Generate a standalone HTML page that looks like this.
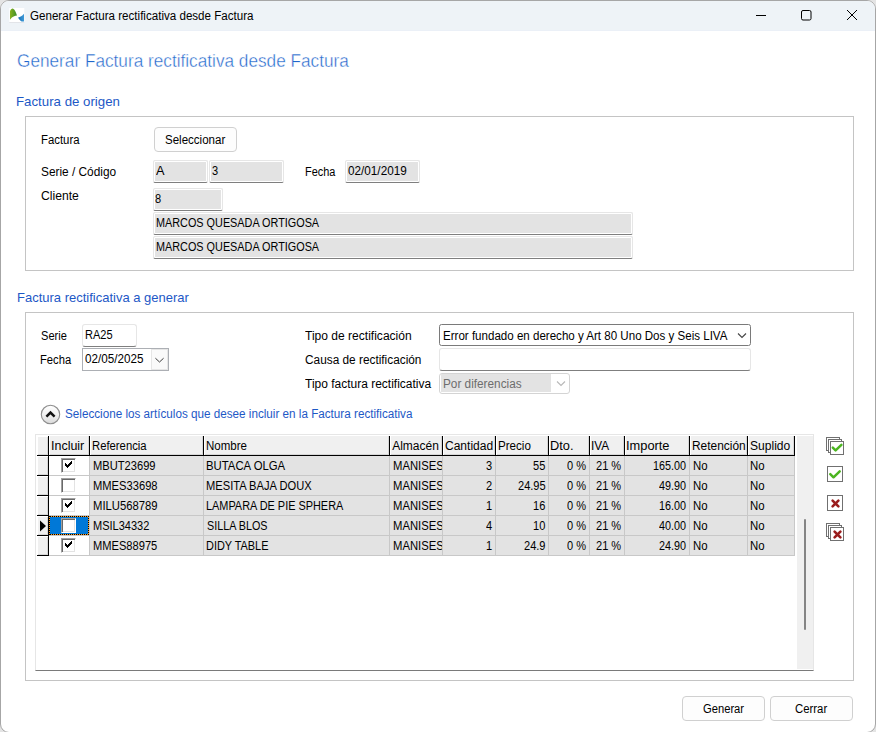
<!DOCTYPE html>
<html><head><meta charset="utf-8"><style>
html,body{margin:0;padding:0;width:876px;height:732px;overflow:hidden;background:#e4e4e4;}
*{box-sizing:border-box;}
body{font-family:"Liberation Sans",sans-serif;font-size:12px;color:#000;position:relative;}
#win{position:absolute;left:0;top:0;width:876px;height:733px;background:#fff;border:1px solid #a6a6a6;border-radius:9px;overflow:hidden;}
#tb{position:absolute;left:0;top:0;width:874px;height:30px;background:#eef3f7;border-bottom:1px solid #ebf0f7;}
.a{position:absolute;}
.t{position:absolute;white-space:nowrap;transform-origin:0 0;}
.light{-webkit-text-stroke:0.4px #fff;}
.box{position:absolute;border:1px solid #c4c4c4;}
.ro{position:absolute;background:#e3e3e3;border:1px solid #e6e6e6;border-bottom:1px solid #7f7f7f;border-radius:2px;box-shadow:inset 0 0 0 1px #fff;}
.ed{position:absolute;background:#fff;border:1px solid #e6e6e6;border-bottom:1px solid #7f7f7f;border-radius:3px;}
.hd{top:436px;height:20px;background:#f0f0f0;border-right:1px solid #000;border-bottom:1px solid #000;box-shadow:inset 1px 0 0 #fff, inset -1px -1px 0 #d6d6d6;}
.rh{left:37px;width:12px;height:20px;background:#f0f0f0;border-right:1px solid #000;border-bottom:1px solid #000;box-shadow:inset 1px 1px 0 #fff, inset -1px -1px 0 #d6d6d6;}
.cell{height:20px;border-right:1px solid #c8c8c8;border-bottom:1px solid #c8c8c8;}
.chk{left:61px;width:15px;height:15px;background:#fff;border-top:1px solid #a0a0a0;border-left:1px solid #a0a0a0;border-right:1px solid #fff;border-bottom:1px solid #fff;box-shadow:inset 1px 1px 0 #696969, inset -1px -1px 0 #e3e3e3;}
.btn{position:absolute;background:#fdfdfd;border:1px solid #d0d0d0;border-radius:4px;}
</style></head><body>

<div id="win"><div id="tb"></div></div>
<svg class="a" style="left:9px;top:8px" width="16" height="16" viewBox="0 0 16 16">
  <defs><linearGradient id="gg" x1="0" y1="0" x2="1" y2="0"><stop offset="0" stop-color="#86b21d"/><stop offset="1" stop-color="#3a8c2c"/></linearGradient>
  <linearGradient id="bg" x1="0" y1="0" x2="1" y2="0"><stop offset="0" stop-color="#1a6fb5"/><stop offset="1" stop-color="#3f9bd8"/></linearGradient></defs>
  <rect x="0.3" y="0" width="15" height="14" fill="#fff"/>
  <rect x="0.3" y="14" width="15" height="1" fill="#e2e4e8"/>
  <path d="M1 11.5 L1 3.2 C1.6 1.4 2.6 0.6 3.6 0.6 C5.2 0.7 7 4 8 7.6 C6 7.7 3.4 8.6 1.2 11.5 Z" fill="url(#gg)"/>
  <path d="M9.1 9.6 C11.2 9 13.2 8 15 5.8 L15 13.6 L12.6 13.6 C11.2 12.6 9.8 11.2 9.1 9.6 Z" fill="url(#bg)"/>
</svg>
<svg class="a" style="left:740px;top:0" width="136" height="30">
  <line x1="16" y1="15.5" x2="26" y2="15.5" stroke="#000" stroke-width="1"/>
  <rect x="61.5" y="10.5" width="9.5" height="9.5" rx="1.5" fill="none" stroke="#000" stroke-width="1"/>
  <path d="M107 10 L117 20 M117 10 L107 20" stroke="#000" stroke-width="1"/>
</svg>

<div class="box" style="left:25px;top:116px;width:829px;height:155px"></div><div class="box" style="left:25px;top:312px;width:829px;height:369px"></div><div class="btn" style="left:154px;top:127px;width:83px;height:25px"></div><div class="ro" style="left:153px;top:160px;width:55px;height:23px"></div><div class="ro" style="left:209px;top:160px;width:75px;height:23px"></div><div class="ro" style="left:345px;top:160px;width:75px;height:23px"></div><div class="ro" style="left:153px;top:188px;width:70px;height:23px"></div><div class="ro" style="left:153px;top:212px;width:480px;height:23px"></div><div class="ro" style="left:153px;top:236px;width:480px;height:23px"></div><div class="ed" style="left:82px;top:324px;width:55px;height:23px"></div><div class="a" style="left:82px;top:348px;width:87px;height:23px;border:1px solid #acafb4;background:#fff"></div><div class="a" style="left:151px;top:349px;width:17px;height:21px;border:1px solid #e6e6e6;background:#fafafa"></div><svg class="a" style="left:154px;top:356px" width="11" height="8"><path d="M1.4 2.2 L5.5 6 L9.6 2.2" fill="none" stroke="#3c3c3c" stroke-width="1"/></svg><div class="a" style="left:439px;top:324px;width:312px;height:22px;border:1px solid #7a7a7a;border-radius:2.5px;background:#fff"></div><svg class="a" style="left:736px;top:331px" width="12" height="9"><path d="M2 2.5 L6 6.5 L10 2.5" fill="none" stroke="#444" stroke-width="1.1"/></svg><div class="ed" style="left:439px;top:348px;width:312px;height:23px"></div><div class="a" style="left:439px;top:373px;width:131px;height:21px;border:1px solid #d4d4d4;border-radius:3px;background:#fff"></div><div class="a" style="left:441px;top:374px;width:110px;height:18px;background:#e3e3e3"></div><svg class="a" style="left:555px;top:379px" width="12" height="9"><path d="M2 2.5 L6 6.5 L10 2.5" fill="none" stroke="#b8b8b8" stroke-width="1.1"/></svg><svg class="a" style="left:40px;top:404px" width="22" height="22"><defs><linearGradient id="eg" x1="0" y1="0" x2="0" y2="1"><stop offset="0" stop-color="#ffffff"/><stop offset="0.5" stop-color="#f1f1f1"/><stop offset="1" stop-color="#d9d9d9"/></linearGradient></defs><circle cx="10.5" cy="10.5" r="9.2" fill="url(#eg)" stroke="#8e8e8e" stroke-width="1.1"/><path d="M6.4 12.6 L10.5 8.5 L14.6 12.6" fill="none" stroke="#111" stroke-width="2.5"/></svg><div class="btn" style="left:682px;top:696px;width:83px;height:25px"></div><div class="btn" style="left:770px;top:696px;width:83px;height:25px"></div>
<div class="a" style="left:35px;top:434px;width:779px;height:237px;border:1px solid #e6e6e6;border-bottom-color:#7a7a7a;background:#fff"></div><div class="a" style="left:797px;top:436px;width:16px;height:233px;background:#f0f0f0"></div><div class="a" style="left:804px;top:519px;width:2px;height:111px;background:#858585;border-radius:1px"></div><div class="a rh" style="top:436px"></div><div class="a hd" style="left:49px;width:41px"></div><div class="a hd" style="left:90px;width:114px"></div><div class="a hd" style="left:204px;width:186px"></div><div class="a hd" style="left:390px;width:53px"></div><div class="a hd" style="left:443px;width:53px"></div><div class="a hd" style="left:496px;width:53px"></div><div class="a hd" style="left:549px;width:41px"></div><div class="a hd" style="left:590px;width:35px"></div><div class="a hd" style="left:625px;width:65px"></div><div class="a hd" style="left:690px;width:58px"></div><div class="a hd" style="left:748px;width:47px"></div><div class="a rh" style="top:456px"></div><div class="a cell" style="left:49px;top:456px;width:41px;background:#fff"></div><div class="a cell" style="left:90px;top:456px;width:114px;background:#e3e3e3"></div><div class="a cell" style="left:204px;top:456px;width:186px;background:#e3e3e3"></div><div class="a cell" style="left:390px;top:456px;width:53px;background:#e3e3e3"></div><div class="a cell" style="left:443px;top:456px;width:53px;background:#e3e3e3"></div><div class="a cell" style="left:496px;top:456px;width:53px;background:#e3e3e3"></div><div class="a cell" style="left:549px;top:456px;width:41px;background:#e3e3e3"></div><div class="a cell" style="left:590px;top:456px;width:35px;background:#e3e3e3"></div><div class="a cell" style="left:625px;top:456px;width:65px;background:#e3e3e3"></div><div class="a cell" style="left:690px;top:456px;width:58px;background:#e3e3e3"></div><div class="a cell" style="left:748px;top:456px;width:47px;background:#e3e3e3"></div><div class="a chk" style="top:458px"></div><svg class="a" style="left:65px;top:461px" width="7" height="7" shape-rendering="crispEdges"><path d="M6 0h1v1h-1zM5 1h2v1h-2zM0 2h1v1h-1zM4 2h3v1h-3zM0 3h2v1h-2zM3 3h3v1h-3zM0 4h5v1h-5zM1 5h3v1h-3zM2 6h1v1h-1z" fill="#000"/></svg><div class="a rh" style="top:476px"></div><div class="a cell" style="left:49px;top:476px;width:41px;background:#fff"></div><div class="a cell" style="left:90px;top:476px;width:114px;background:#e3e3e3"></div><div class="a cell" style="left:204px;top:476px;width:186px;background:#e3e3e3"></div><div class="a cell" style="left:390px;top:476px;width:53px;background:#e3e3e3"></div><div class="a cell" style="left:443px;top:476px;width:53px;background:#e3e3e3"></div><div class="a cell" style="left:496px;top:476px;width:53px;background:#e3e3e3"></div><div class="a cell" style="left:549px;top:476px;width:41px;background:#e3e3e3"></div><div class="a cell" style="left:590px;top:476px;width:35px;background:#e3e3e3"></div><div class="a cell" style="left:625px;top:476px;width:65px;background:#e3e3e3"></div><div class="a cell" style="left:690px;top:476px;width:58px;background:#e3e3e3"></div><div class="a cell" style="left:748px;top:476px;width:47px;background:#e3e3e3"></div><div class="a chk" style="top:478px"></div><div class="a rh" style="top:496px"></div><div class="a cell" style="left:49px;top:496px;width:41px;background:#fff"></div><div class="a cell" style="left:90px;top:496px;width:114px;background:#e3e3e3"></div><div class="a cell" style="left:204px;top:496px;width:186px;background:#e3e3e3"></div><div class="a cell" style="left:390px;top:496px;width:53px;background:#e3e3e3"></div><div class="a cell" style="left:443px;top:496px;width:53px;background:#e3e3e3"></div><div class="a cell" style="left:496px;top:496px;width:53px;background:#e3e3e3"></div><div class="a cell" style="left:549px;top:496px;width:41px;background:#e3e3e3"></div><div class="a cell" style="left:590px;top:496px;width:35px;background:#e3e3e3"></div><div class="a cell" style="left:625px;top:496px;width:65px;background:#e3e3e3"></div><div class="a cell" style="left:690px;top:496px;width:58px;background:#e3e3e3"></div><div class="a cell" style="left:748px;top:496px;width:47px;background:#e3e3e3"></div><div class="a chk" style="top:498px"></div><svg class="a" style="left:65px;top:501px" width="7" height="7" shape-rendering="crispEdges"><path d="M6 0h1v1h-1zM5 1h2v1h-2zM0 2h1v1h-1zM4 2h3v1h-3zM0 3h2v1h-2zM3 3h3v1h-3zM0 4h5v1h-5zM1 5h3v1h-3zM2 6h1v1h-1z" fill="#000"/></svg><div class="a rh" style="top:516px"></div><div class="a cell" style="left:49px;top:516px;width:41px;background:#fff"></div><div class="a cell" style="left:90px;top:516px;width:114px;background:#e3e3e3"></div><div class="a cell" style="left:204px;top:516px;width:186px;background:#e3e3e3"></div><div class="a cell" style="left:390px;top:516px;width:53px;background:#e3e3e3"></div><div class="a cell" style="left:443px;top:516px;width:53px;background:#e3e3e3"></div><div class="a cell" style="left:496px;top:516px;width:53px;background:#e3e3e3"></div><div class="a cell" style="left:549px;top:516px;width:41px;background:#e3e3e3"></div><div class="a cell" style="left:590px;top:516px;width:35px;background:#e3e3e3"></div><div class="a cell" style="left:625px;top:516px;width:65px;background:#e3e3e3"></div><div class="a cell" style="left:690px;top:516px;width:58px;background:#e3e3e3"></div><div class="a cell" style="left:748px;top:516px;width:47px;background:#e3e3e3"></div><div class="a" style="left:49px;top:516px;width:40px;height:19px;background:#0078d7"></div><div class="a" style="left:49px;top:516px;width:40px;height:19px;border:1px solid #ff9a1a;outline:1px dotted #000;outline-offset:-1px"></div><svg class="a" style="left:39px;top:520px" width="8" height="12"><path d="M1 0.5 L7 6 L1 11.5Z" fill="#000"/></svg><div class="a chk" style="top:518px"></div><div class="a rh" style="top:536px"></div><div class="a cell" style="left:49px;top:536px;width:41px;background:#fff"></div><div class="a cell" style="left:90px;top:536px;width:114px;background:#e3e3e3"></div><div class="a cell" style="left:204px;top:536px;width:186px;background:#e3e3e3"></div><div class="a cell" style="left:390px;top:536px;width:53px;background:#e3e3e3"></div><div class="a cell" style="left:443px;top:536px;width:53px;background:#e3e3e3"></div><div class="a cell" style="left:496px;top:536px;width:53px;background:#e3e3e3"></div><div class="a cell" style="left:549px;top:536px;width:41px;background:#e3e3e3"></div><div class="a cell" style="left:590px;top:536px;width:35px;background:#e3e3e3"></div><div class="a cell" style="left:625px;top:536px;width:65px;background:#e3e3e3"></div><div class="a cell" style="left:690px;top:536px;width:58px;background:#e3e3e3"></div><div class="a cell" style="left:748px;top:536px;width:47px;background:#e3e3e3"></div><div class="a chk" style="top:538px"></div><svg class="a" style="left:65px;top:541px" width="7" height="7" shape-rendering="crispEdges"><path d="M6 0h1v1h-1zM5 1h2v1h-2zM0 2h1v1h-1zM4 2h3v1h-3zM0 3h2v1h-2zM3 3h3v1h-3zM0 4h5v1h-5zM1 5h3v1h-3zM2 6h1v1h-1z" fill="#000"/></svg>

<svg class="a" style="left:824px;top:435px" width="22" height="22">
 <rect x="2.5" y="2.5" width="13" height="13" fill="#fff" stroke="#707070"/>
 <rect x="4.5" y="4.5" width="13" height="13" fill="#fff" stroke="#707070"/>
 <rect x="6.5" y="6.5" width="13" height="13" fill="#fff" stroke="#707070"/>
 <path d="M8.8 12.6 L11.6 15.4 L17.4 9.8" fill="none" stroke="#4cb520" stroke-width="2.5" stroke-linecap="round" stroke-linejoin="round"/>
</svg>
<svg class="a" style="left:824px;top:463px" width="22" height="22">
 <rect x="3.5" y="3.5" width="15" height="15" fill="#fff" stroke="#707070"/>
 <path d="M6.3 11.2 L9.5 14.3 L15.7 8.3" fill="none" stroke="#4cb520" stroke-width="2.5" stroke-linecap="round" stroke-linejoin="round"/>
</svg>
<svg class="a" style="left:824px;top:492px" width="22" height="22">
 <rect x="3.5" y="3.5" width="15" height="15" fill="#fff" stroke="#707070"/>
 <path d="M8.6 8.6 L14.4 14.4 M14.4 8.6 L8.6 14.4" fill="none" stroke="#9a1d1d" stroke-width="2.6" stroke-linecap="round"/>
</svg>
<svg class="a" style="left:824px;top:521px" width="22" height="22">
 <rect x="2.5" y="2.5" width="13" height="13" fill="#fff" stroke="#707070"/>
 <rect x="4.5" y="4.5" width="13" height="13" fill="#fff" stroke="#707070"/>
 <rect x="6.5" y="6.5" width="13" height="13" fill="#fff" stroke="#707070"/>
 <path d="M10.6 10.6 L16.4 16.4 M16.4 10.6 L10.6 16.4" fill="none" stroke="#9a1d1d" stroke-width="2.6" stroke-linecap="round"/>
</svg>

<div class="t " style="top:9px;font-size:12px;line-height:14px;left:30.42px;transform:scaleX(0.9658);">Generar Factura rectificativa desde Factura</div>
<div class="t light" style="top:51px;font-size:18px;line-height:20px;left:17.14px;transform:scaleX(0.9558);color:#1f66cc;">Generar Factura rectificativa desde Factura</div>
<div class="t " style="top:94px;font-size:13px;line-height:15px;left:16.48px;transform:scaleX(1.0200);color:#1d58c6;">Factura de origen</div>
<div class="t " style="top:133px;font-size:12px;line-height:14px;left:40.85px;transform:scaleX(0.9472);">Factura</div>
<div class="t " style="top:133px;font-size:12px;line-height:14px;left:164.82px;transform:scaleX(0.9613);">Seleccionar</div>
<div class="t " style="top:165px;font-size:12px;line-height:14px;left:40.71px;transform:scaleX(0.9880);">Serie / Código</div>
<div class="t " style="top:164px;font-size:12px;line-height:14px;left:155.70px;transform:scaleX(1.0625);">A</div>
<div class="t " style="top:164px;font-size:12px;line-height:14px;left:211.73px;transform:scaleX(0.9200);">3</div>
<div class="t " style="top:165px;font-size:12px;line-height:14px;left:304.78px;transform:scaleX(0.9108);">Fecha</div>
<div class="t " style="top:164px;font-size:12px;line-height:14px;left:347.81px;transform:scaleX(0.9780);">02/01/2019</div>
<div class="t " style="top:189px;font-size:12px;line-height:14px;left:40.59px;transform:scaleX(1.0138);">Cliente</div>
<div class="t " style="top:192px;font-size:12px;line-height:14px;left:155.44px;transform:scaleX(0.9200);">8</div>
<div class="t " style="top:216px;font-size:12px;line-height:14px;left:155.79px;transform:scaleX(0.9037);">MARCOS QUESADA ORTIGOSA</div>
<div class="t " style="top:240px;font-size:12px;line-height:14px;left:155.79px;transform:scaleX(0.9037);">MARCOS QUESADA ORTIGOSA</div>
<div class="t " style="top:290px;font-size:13px;line-height:15px;left:16.60px;transform:scaleX(0.9994);color:#1d58c6;">Factura rectificativa a generar</div>
<div class="t " style="top:329px;font-size:12px;line-height:14px;left:40.54px;transform:scaleX(0.9222);">Serie</div>
<div class="t " style="top:328px;font-size:12px;line-height:14px;left:84.77px;transform:scaleX(0.9199);">RA25</div>
<div class="t " style="top:353px;font-size:12px;line-height:14px;left:40.16px;transform:scaleX(0.9354);">Fecha</div>
<div class="t " style="top:352px;font-size:12px;line-height:14px;left:84.81px;transform:scaleX(0.9730);">02/05/2025</div>
<div class="t " style="top:329px;font-size:12px;line-height:14px;left:305.40px;transform:scaleX(1.0038);">Tipo de rectificación</div>
<div class="t " style="top:329px;font-size:12px;line-height:14px;left:442.93px;transform:scaleX(0.9633);">Error fundado en derecho y Art 80 Uno Dos y Seis LIVA</div>
<div class="t " style="top:353px;font-size:12px;line-height:14px;left:305.01px;transform:scaleX(0.9863);">Causa de rectificación</div>
<div class="t " style="top:377px;font-size:12px;line-height:14px;left:305.40px;transform:scaleX(0.9992);">Tipo factura rectificativa</div>
<div class="t " style="top:377px;font-size:12px;line-height:14px;left:442.52px;transform:scaleX(0.9822);color:#6d6d6d;">Por diferencias</div>
<div class="t " style="top:407px;font-size:12px;line-height:14px;left:64.91px;transform:scaleX(0.9736);color:#1d58c6;">Seleccione los artículos que desee incluir en la Factura rectificativa</div>
<div class="t " style="top:702px;font-size:12px;line-height:14px;left:703.24px;transform:scaleX(0.9330);">Generar</div>
<div class="t " style="top:702px;font-size:12px;line-height:14px;left:795.03px;transform:scaleX(0.9458);">Cerrar</div>
<div class="t " style="top:439px;font-size:12px;line-height:14px;left:50.66px;transform:scaleX(1.0390);">Incluir</div>
<div class="t " style="top:439px;font-size:12px;line-height:14px;left:91.65px;transform:scaleX(0.9406);">Referencia</div>
<div class="t " style="top:439px;font-size:12px;line-height:14px;left:205.84px;transform:scaleX(0.9600);">Nombre</div>
<div class="t " style="top:439px;font-size:12px;line-height:14px;left:392.20px;transform:scaleX(1.0000);">Almacén</div>
<div class="t " style="top:439px;font-size:12px;line-height:14px;left:444.80px;transform:scaleX(1.0021);">Cantidad</div>
<div class="t " style="top:439px;font-size:12px;line-height:14px;left:498.03px;transform:scaleX(0.9664);">Precio</div>
<div class="t " style="top:439px;font-size:12px;line-height:14px;left:550.14px;transform:scaleX(1.0647);">Dto.</div>
<div class="t " style="top:439px;font-size:12px;line-height:14px;left:591.32px;transform:scaleX(0.9828);">IVA</div>
<div class="t " style="top:439px;font-size:12px;line-height:14px;left:626.02px;transform:scaleX(1.0691);">Importe</div>
<div class="t " style="top:439px;font-size:12px;line-height:14px;left:691.61px;transform:scaleX(0.9924);">Retención</div>
<div class="t " style="top:439px;font-size:12px;line-height:14px;left:749.70px;transform:scaleX(1.0051);">Suplido</div>
<div class="t " style="top:459px;font-size:12px;line-height:14px;left:92.66px;transform:scaleX(0.9288);">MBUT23699</div>
<div class="t " style="top:459px;font-size:12px;line-height:14px;left:206.45px;transform:scaleX(0.9445);">BUTACA OLGA</div>
<div class="a" style="left:390px;top:459px;width:52px;height:16px;overflow:hidden"><div class="t" style="top:0px;font-size:12px;line-height:14px;left:2.75px;transform:scaleX(0.9400);">MANISES</div></div>
<div class="t " style="top:459px;font-size:12px;line-height:14px;left:485.80px;transform:scaleX(0.9200);">3</div>
<div class="t " style="top:459px;font-size:12px;line-height:14px;left:533.43px;transform:scaleX(0.9200);">55</div>
<div class="t " style="top:459px;font-size:12px;line-height:14px;left:567.32px;transform:scaleX(0.9200);">0 %</div>
<div class="t " style="top:459px;font-size:12px;line-height:14px;left:596.16px;transform:scaleX(0.9200);">21 %</div>
<div class="t " style="top:459px;font-size:12px;line-height:14px;left:653.33px;transform:scaleX(0.9000);">165.00</div>
<div class="t " style="top:459px;font-size:12px;line-height:14px;left:692.75px;transform:scaleX(0.9500);">No</div>
<div class="t " style="top:459px;font-size:12px;line-height:14px;left:750.44px;transform:scaleX(0.9500);">No</div>
<div class="t " style="top:479px;font-size:12px;line-height:14px;left:92.66px;transform:scaleX(0.9309);">MMES33698</div>
<div class="t " style="top:479px;font-size:12px;line-height:14px;left:206.46px;transform:scaleX(0.9281);">MESITA BAJA DOUX</div>
<div class="a" style="left:390px;top:479px;width:52px;height:16px;overflow:hidden"><div class="t" style="top:0px;font-size:12px;line-height:14px;left:2.75px;transform:scaleX(0.9400);">MANISES</div></div>
<div class="t " style="top:479px;font-size:12px;line-height:14px;left:485.89px;transform:scaleX(0.9200);">2</div>
<div class="t " style="top:479px;font-size:12px;line-height:14px;left:518.07px;transform:scaleX(0.9200);">24.95</div>
<div class="t " style="top:479px;font-size:12px;line-height:14px;left:567.32px;transform:scaleX(0.9200);">0 %</div>
<div class="t " style="top:479px;font-size:12px;line-height:14px;left:596.16px;transform:scaleX(0.9200);">21 %</div>
<div class="t " style="top:479px;font-size:12px;line-height:14px;left:659.36px;transform:scaleX(0.9000);">49.90</div>
<div class="t " style="top:479px;font-size:12px;line-height:14px;left:692.75px;transform:scaleX(0.9500);">No</div>
<div class="t " style="top:479px;font-size:12px;line-height:14px;left:750.44px;transform:scaleX(0.9500);">No</div>
<div class="t " style="top:499px;font-size:12px;line-height:14px;left:92.65px;transform:scaleX(0.9406);">MILU568789</div>
<div class="t " style="top:499px;font-size:12px;line-height:14px;left:206.48px;transform:scaleX(0.9082);">LAMPARA DE PIE SPHERA</div>
<div class="a" style="left:390px;top:499px;width:52px;height:16px;overflow:hidden"><div class="t" style="top:0px;font-size:12px;line-height:14px;left:2.75px;transform:scaleX(0.9400);">MANISES</div></div>
<div class="t " style="top:499px;font-size:12px;line-height:14px;left:485.89px;transform:scaleX(0.9200);">1</div>
<div class="t " style="top:499px;font-size:12px;line-height:14px;left:533.43px;transform:scaleX(0.9200);">16</div>
<div class="t " style="top:499px;font-size:12px;line-height:14px;left:567.32px;transform:scaleX(0.9200);">0 %</div>
<div class="t " style="top:499px;font-size:12px;line-height:14px;left:596.16px;transform:scaleX(0.9200);">21 %</div>
<div class="t " style="top:499px;font-size:12px;line-height:14px;left:659.36px;transform:scaleX(0.9000);">16.00</div>
<div class="t " style="top:499px;font-size:12px;line-height:14px;left:692.75px;transform:scaleX(0.9500);">No</div>
<div class="t " style="top:499px;font-size:12px;line-height:14px;left:750.44px;transform:scaleX(0.9500);">No</div>
<div class="t " style="top:519px;font-size:12px;line-height:14px;left:92.67px;transform:scaleX(0.9182);">MSIL34332</div>
<div class="t " style="top:519px;font-size:12px;line-height:14px;left:206.85px;transform:scaleX(0.8976);">SILLA BLOS</div>
<div class="a" style="left:390px;top:519px;width:52px;height:16px;overflow:hidden"><div class="t" style="top:0px;font-size:12px;line-height:14px;left:2.75px;transform:scaleX(0.9400);">MANISES</div></div>
<div class="t " style="top:519px;font-size:12px;line-height:14px;left:485.61px;transform:scaleX(0.9200);">4</div>
<div class="t " style="top:519px;font-size:12px;line-height:14px;left:533.43px;transform:scaleX(0.9200);">10</div>
<div class="t " style="top:519px;font-size:12px;line-height:14px;left:567.32px;transform:scaleX(0.9200);">0 %</div>
<div class="t " style="top:519px;font-size:12px;line-height:14px;left:596.16px;transform:scaleX(0.9200);">21 %</div>
<div class="t " style="top:519px;font-size:12px;line-height:14px;left:659.36px;transform:scaleX(0.9000);">40.00</div>
<div class="t " style="top:519px;font-size:12px;line-height:14px;left:692.75px;transform:scaleX(0.9500);">No</div>
<div class="t " style="top:519px;font-size:12px;line-height:14px;left:750.44px;transform:scaleX(0.9500);">No</div>
<div class="t " style="top:539px;font-size:12px;line-height:14px;left:92.67px;transform:scaleX(0.9265);">MMES88975</div>
<div class="t " style="top:539px;font-size:12px;line-height:14px;left:206.48px;transform:scaleX(0.9094);">DIDY TABLE</div>
<div class="a" style="left:390px;top:539px;width:52px;height:16px;overflow:hidden"><div class="t" style="top:0px;font-size:12px;line-height:14px;left:2.75px;transform:scaleX(0.9400);">MANISES</div></div>
<div class="t " style="top:539px;font-size:12px;line-height:14px;left:485.89px;transform:scaleX(0.9200);">1</div>
<div class="t " style="top:539px;font-size:12px;line-height:14px;left:524.32px;transform:scaleX(0.9200);">24.9</div>
<div class="t " style="top:539px;font-size:12px;line-height:14px;left:567.32px;transform:scaleX(0.9200);">0 %</div>
<div class="t " style="top:539px;font-size:12px;line-height:14px;left:596.16px;transform:scaleX(0.9200);">21 %</div>
<div class="t " style="top:539px;font-size:12px;line-height:14px;left:659.36px;transform:scaleX(0.9000);">24.90</div>
<div class="t " style="top:539px;font-size:12px;line-height:14px;left:692.75px;transform:scaleX(0.9500);">No</div>
<div class="t " style="top:539px;font-size:12px;line-height:14px;left:750.44px;transform:scaleX(0.9500);">No</div>
</body></html>
